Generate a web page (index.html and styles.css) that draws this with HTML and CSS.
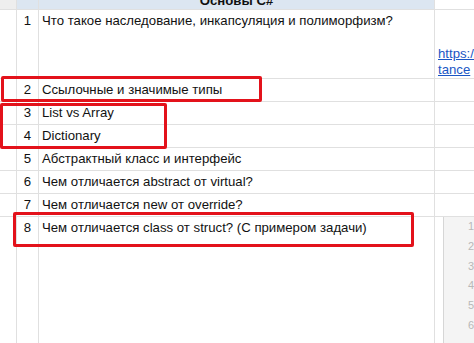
FILE: index.html
```html
<!DOCTYPE html>
<html lang="ru">
<head>
<meta charset="utf-8">
<title>Основы C#</title>
<link rel="stylesheet" href="styles.css">
</head>
<body>
<div class="sheet">
  <div class="grid">
    <div class="cell gutter-head"></div>
    <div class="cell head"></div>
    <div class="cell head title"><span>Основы C#</span></div>
    <div class="cell plain"></div>

    <div class="cell"></div>
    <div class="cell num">1</div>
    <div class="cell text">Что такое наследование, инкапсуляция и полиморфизм?</div>
    <div class="cell link-cell"><a class="link" href="#">https://metanit.com/sharp/tutorial/3.7<br>tance</a></div>

    <div class="cell"></div>
    <div class="cell num">2</div>
    <div class="cell text">Ссылочные и значимые типы</div>
    <div class="cell"></div>

    <div class="cell"></div>
    <div class="cell num">3</div>
    <div class="cell text">List vs Array</div>
    <div class="cell"></div>

    <div class="cell"></div>
    <div class="cell num">4</div>
    <div class="cell text">Dictionary</div>
    <div class="cell"></div>

    <div class="cell"></div>
    <div class="cell num">5</div>
    <div class="cell text">Абстрактный класс и интерфейс</div>
    <div class="cell"></div>

    <div class="cell"></div>
    <div class="cell num">6</div>
    <div class="cell text">Чем отличается abstract от virtual?</div>
    <div class="cell"></div>

    <div class="cell"></div>
    <div class="cell num">7</div>
    <div class="cell text">Чем отличается new от override?</div>
    <div class="cell"></div>

    <div class="cell"></div>
    <div class="cell num">8</div>
    <div class="cell text">Чем отличается class от struct? (С примером задачи)</div>
    <div class="cell code-cell">
      <div class="code">
        <div class="ln">1</div>
        <div class="ln">2</div>
        <div class="ln">3</div>
        <div class="ln">4</div>
        <div class="ln">5</div>
        <div class="ln">6</div>
      </div>
    </div>
  </div>

  <div class="mark mark-a"></div>
  <div class="mark mark-b"></div>
  <div class="mark mark-c"></div>
</div>
</body>
</html>
```
FILE: styles.css
```css
html, body {
  margin: 0;
  padding: 0;
  width: 474px;
  height: 343px;
  overflow: hidden;
  background: #ffffff;
}

.sheet {
  position: relative;
  width: 474px;
  height: 343px;
  overflow: hidden;
  font-family: "Liberation Sans", Arial, sans-serif;
  font-size: 13.2px;
  color: #111111;
}

.grid {
  display: grid;
  grid-template-columns: 16px 21px 395px 240px;
  grid-template-rows: 9px 68px repeat(6, 22px) 140px;
  gap: 1px;
  background: #e0e0e0;
  width: 676px;
}

.cell {
  background: #ffffff;
  line-height: 16px;
  overflow: hidden;
  white-space: nowrap;
}

.gutter-head {
  background: #eeeeee;
}

.head {
  background: #dce6f1;
}

.title {
  text-align: center;
  font-weight: bold;
}

.title span {
  display: block;
  margin-top: -7px;
}

.num {
  text-align: center;
  padding-top: 3px;
}

.text {
  padding: 3px 0 0 3px;
}

.link-cell {
  display: flex;
  flex-direction: column;
  justify-content: flex-end;
  padding-left: 3px;
}

.link {
  color: #1a56c4;
  text-decoration: underline;
}

.code-cell {
  padding-left: 8px;
}

.code {
  height: 100%;
  background: #f4f4f4;
  border-left: 1px solid #d6d6d6;
  padding-left: 24px;
  color: #b8b8b8;
  font-size: 11px;
}

.ln {
  line-height: 19.8px;
}

.mark {
  position: absolute;
  border: 3px solid #e3121b;
  border-radius: 2px;
  box-sizing: border-box;
}

.mark-a {
  left: 1px;
  top: 76px;
  width: 261px;
  height: 26px;
}

.mark-b {
  left: 0;
  top: 103px;
  width: 167px;
  height: 46px;
}

.mark-c {
  left: 13px;
  top: 212px;
  width: 401px;
  height: 35px;
}
```
